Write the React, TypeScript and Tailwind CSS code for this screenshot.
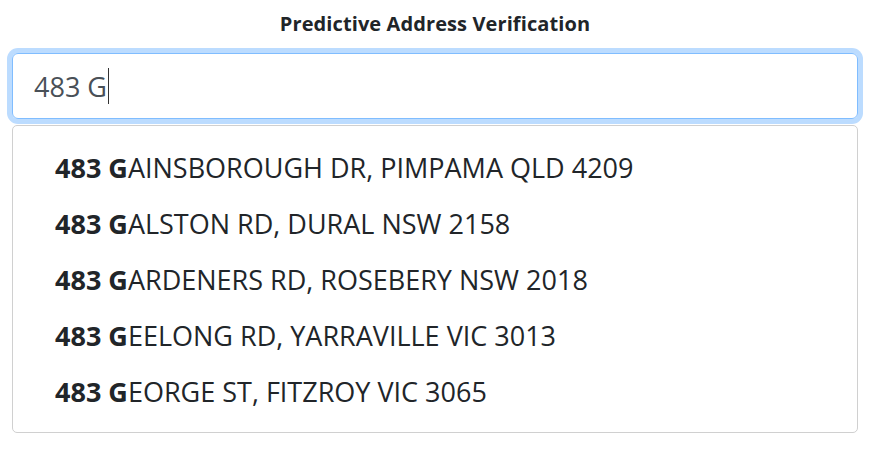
import React from "react";

const items = [
  ["AINSBOROUGH DR, PIMPAMA QLD 4209"],
  ["ALSTON RD, DURAL NSW 2158"],
  ["ARDENERS RD, ROSEBERY NSW 2018"],
  ["EELONG RD, YARRAVILLE VIC 3013"],
  ["EORGE ST, FITZROY VIC 3065"],
];

export default function App() {
  return (
    <div
      className="w-[875px] h-[452px] bg-white text-[#212529] pl-[12px] pr-[17px]"
      style={{ fontFamily: '"Open Sans", "Noto Sans", sans-serif' }}
    >
      <div className="h-[53px] flex items-center justify-center">
        <h1 className="text-[20px] font-bold leading-none mt-[-5px] tracking-[0.1px]">Predictive Address Verification</h1>
      </div>
      <div className="h-[66px] border border-[#80bdff] rounded-[6px] shadow-[0_0_0_5px_#bcdcff] flex items-center pl-[21px]">
        <span className="text-[27px] leading-none text-[#495057]">483 G</span>
        <span className="w-px h-[36px] bg-[#333] ml-[1px]" />
      </div>
      <div className="mt-[6px] h-[308px] border border-[#d0d0d0] rounded-[5px] py-[13px]">
        {items.map(([rest]) => (
          <div key={rest} className="h-[56px] flex items-center pl-[42px] text-[27px] leading-none">
            <span className="font-bold">483 G</span>
            <span>{rest}</span>
          </div>
        ))}
      </div>
    </div>
  );
}
